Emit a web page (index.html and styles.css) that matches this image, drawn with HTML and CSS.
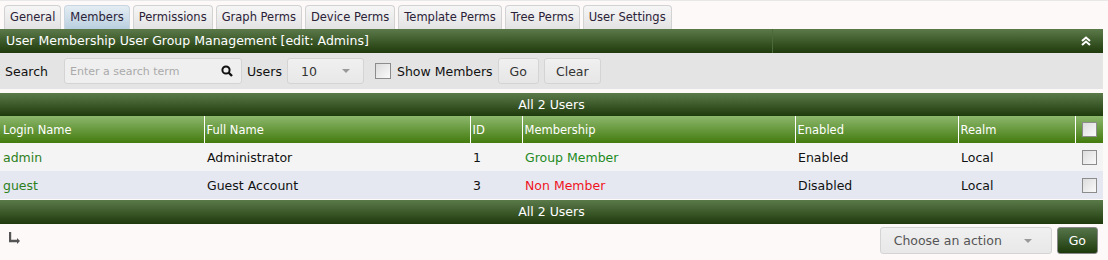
FILE: index.html
```html
<!DOCTYPE html>
<html lang="en">
<head>
  <meta charset="UTF-8">
  <title>User Group Management</title>
  <link rel="stylesheet" href="styles.css">
</head>
<body>
  <div class="page">
    <ul class="tabs">
      <li class="tab">General</li>
      <li class="tab selected">Members</li>
      <li class="tab">Permissions</li>
      <li class="tab">Graph Perms</li>
      <li class="tab">Device Perms</li>
      <li class="tab">Template Perms</li>
      <li class="tab">Tree Perms</li>
      <li class="tab">User Settings</li>
    </ul>

    <div class="panel-head">
      <div class="panel-title">User Membership User Group Management [edit: Admins]</div>
      <div class="panel-tools">
        <svg width="10" height="10" viewBox="0 0 10 10">
          <path d="M1 5 L5 1.5 L9 5 M1 9 L5 5.5 L9 9" fill="none" stroke="#fff" stroke-width="2"/>
        </svg>
      </div>
    </div>

    <div class="filter">
      <span class="lbl first">Search</span>
      <div class="search">
        <span class="ph">Enter a search term</span>
        <svg width="12" height="12" viewBox="0 0 12 12">
          <circle cx="5" cy="5" r="3.6" fill="none" stroke="#111" stroke-width="2"/>
          <path d="M7.5 7.5 L11 11" stroke="#111" stroke-width="2.4"/>
        </svg>
      </div>
      <span class="lbl">Users</span>
      <div class="select">
        <span>10</span>
        <span class="caret"></span>
      </div>
      <span class="cb big"></span>
      <span class="lbl">Show Members</span>
      <button class="btn">Go</button>
      <button class="btn">Clear</button>
    </div>

    <div class="bar">All 2 Users</div>
    <table class="grid">
      <thead>
        <tr>
          <th class="c-login">Login Name</th>
          <th class="c-full">Full Name</th>
          <th class="c-id">ID</th>
          <th class="c-mem">Membership</th>
          <th class="c-en">Enabled</th>
          <th class="c-realm">Realm</th>
          <th class="c-cb"><span class="cb"></span></th>
        </tr>
      </thead>
      <tbody>
        <tr class="odd">
          <td><a class="link">admin</a></td>
          <td>Administrator</td>
          <td>1</td>
          <td class="member">Group Member</td>
          <td>Enabled</td>
          <td>Local</td>
          <td class="c-cb"><span class="cb"></span></td>
        </tr>
        <tr class="even">
          <td><a class="link">guest</a></td>
          <td>Guest Account</td>
          <td>3</td>
          <td class="nonmember">Non Member</td>
          <td>Disabled</td>
          <td>Local</td>
          <td class="c-cb"><span class="cb"></span></td>
        </tr>
      </tbody>
    </table>
    <div class="bar bottom">All 2 Users</div>

    <div class="actions">
      <svg class="arrow" width="12" height="12" viewBox="0 0 12 12">
        <path d="M1 0 V9 H8" fill="none" stroke="#555" stroke-width="2.4"/>
        <path d="M8 6 L11 9 L8 12 Z" fill="#555"/>
      </svg>
      <div class="right">
        <div class="select action-select">
          <span>Choose an action</span>
          <span class="caret"></span>
        </div>
        <button class="btn dark">Go</button>
      </div>
    </div>
  </div>
</body>
</html>
```

FILE: styles.css
```css
html, body {
  margin: 0;
  padding: 0;
  background: #fdf9f8;
  font-family: "DejaVu Sans", Verdana, sans-serif;
  font-size: 12.5px;
  color: #111;
}

body {
  border-top: 1px solid #e8e8e8;
}

.page {
  width: 1103px;
}

/* tabs */
.tabs {
  list-style: none;
  margin: 0;
  padding: 4px 0 0 4px;
  display: flex;
  gap: 3px;
  height: 24px;
}

.tab {
  height: 23px;
  line-height: 23px;
  padding: 0 5px;
  border: 1px solid #d2d2d2;
  border-bottom: none;
  border-radius: 4px 4px 0 0;
  background: linear-gradient(#f6f6f6, #e3e3e3);
  color: #2b2238;
  font-size: 11.5px;
}

.tab.selected {
  background: linear-gradient(#e4edf3, #b9cfdf);
  border-color: #c9d6e0;
}

/* panel header */
.panel-head {
  display: flex;
  height: 24px;
  background: linear-gradient(#5b7a4a, #1f3a0c);
  color: #fff;
}

.panel-title {
  width: 766px;
  padding-left: 6px;
  line-height: 24px;
  border-right: 1px solid #4a6a38;
}

.panel-tools {
  flex: 1;
  display: flex;
  justify-content: flex-end;
  align-items: center;
  padding-right: 12px;
}

/* filter row */
.filter {
  display: flex;
  align-items: center;
  height: 36px;
  background: #e4e4e4;
  padding-left: 5px;
  gap: 5px;
  margin-bottom: 4px;
}

.lbl {
  color: #111;
}

.lbl.first {
  margin-right: 11px;
}

.search {
  width: 178px;
  height: 26px;
  border: 1px solid #d4d4d4;
  border-radius: 3px;
  background: #efefef;
  display: flex;
  align-items: center;
  justify-content: space-between;
  padding: 0 8px 0 5px;
  box-sizing: border-box;
}

.ph {
  color: #aaa;
  font-size: 11px;
}

.select {
  height: 26px;
  box-sizing: border-box;
  border: 1px solid #d4d4d4;
  border-radius: 3px;
  background: linear-gradient(#f0f0f0, #e8e8e8);
  display: flex;
  align-items: center;
  justify-content: space-between;
  padding: 0 13px;
  width: 77px;
  color: #333;
}

.caret {
  width: 0;
  height: 0;
  border-left: 4px solid transparent;
  border-right: 4px solid transparent;
  border-top: 4px solid #999;
}

.cb {
  display: inline-block;
  width: 13px;
  height: 13px;
  border: 1px solid #8c8c8c;
  background: linear-gradient(135deg, #dcdcdc, #fafafa);
  vertical-align: middle;
}

.cb.big {
  width: 14px;
  height: 14px;
  margin-left: 6px;
  margin-right: 1px;
}

.btn {
  font-family: inherit;
  font-size: 12.5px;
  height: 26px;
  border: 1px solid #d4d4d4;
  border-radius: 3px;
  background: linear-gradient(#f0f0f0, #e6e6e6);
  color: #333;
  padding: 0 11px;
}

/* grid */
.bar {
  height: 23px;
  line-height: 23px;
  text-align: center;
  color: #fff;
  background: linear-gradient(#5b7a4a, #1f3a0c);
}

.bar.bottom {
  margin-top: 1px;
  height: 24px;
  line-height: 24px;
}

.grid {
  width: 1103px;
  border-collapse: collapse;
  table-layout: fixed;
}

.grid th {
  box-sizing: border-box;
  height: 27px;
  padding: 0 0 0 2px;
  text-align: left;
  font-weight: normal;
  color: #fff;
  background: linear-gradient(#8cb76d, #437b0e);
  border-left: 1px solid #fff;
  font-size: 11.5px;
}

.grid th:first-child {
  border-left: none;
  padding-left: 3px;
}

.c-login { width: 204px; }
.c-full { width: 266px; }
.c-id { width: 52px; }
.c-mem { width: 273px; }
.c-en { width: 163px; }
.c-realm { width: 117px; }
.grid th.c-cb { width: 28px; }

.grid td {
  height: 28px;
  padding: 0 0 0 3px;
  color: #111;
}

.grid tr.odd td { background: #f4f4f4; }
.grid tr.even td { background: #e5e8f1; }

.grid .c-cb {
  text-align: center;
  padding: 0;
}

.link { color: #2d7f1c; }
.grid td.member { color: #1e8a1e; }
.grid td.nonmember { color: #f0141e; }

/* bottom actions */
.actions {
  display: flex;
  justify-content: space-between;
  padding: 3px 5px 0 9px;
}

.arrow {
  margin-top: 5px;
}

.right {
  display: flex;
  gap: 5px;
}

.action-select {
  width: 172px;
  height: 27px;
  padding: 0 19px 0 13px;
  color: #555;
}

.btn.dark {
  height: 27px;
  background: linear-gradient(#55754a, #1e3a0c);
  border-color: #888;
  color: #fff;
  padding: 0 11px;
}
```
